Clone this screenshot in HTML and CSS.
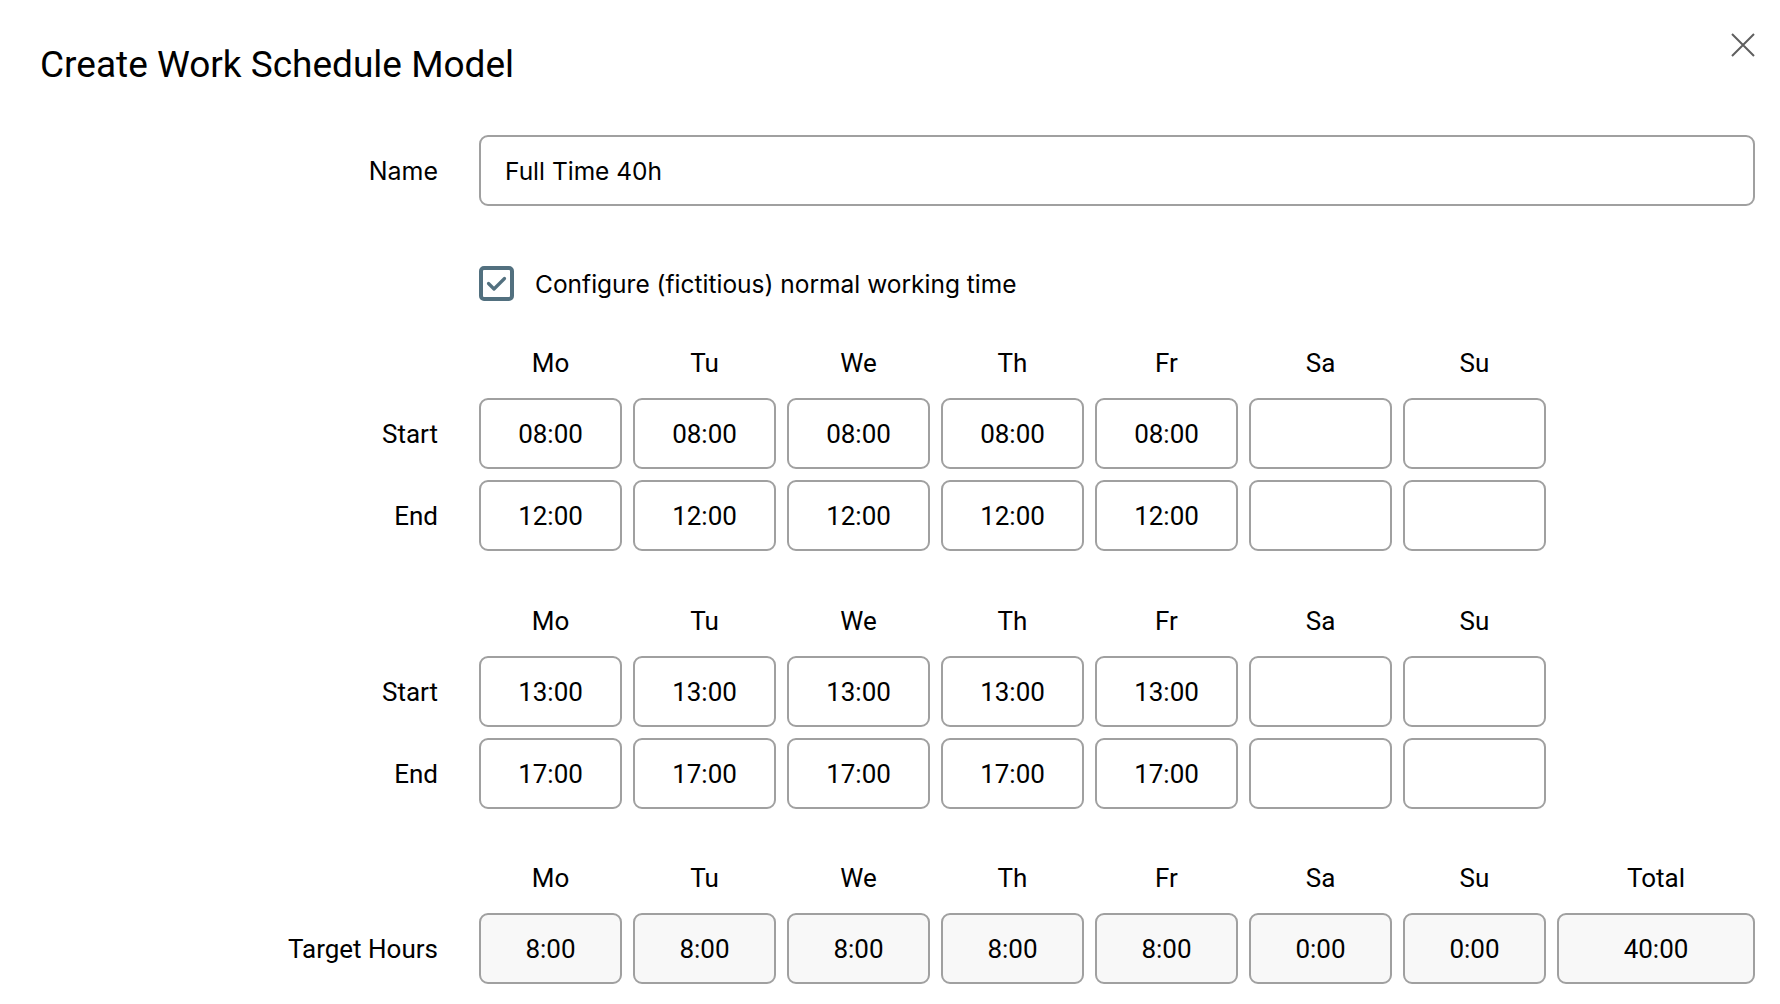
FILE: index.html
```html
<!DOCTYPE html>
<html lang="en">
<head>
    <meta charset="UTF-8">
    <meta name="viewport" content="width=device-width, initial-scale=1.0">
    <title>Create Work Schedule Model</title>
    <link rel="stylesheet" href="styles.css">
</head>
<body>
<div class="dialog">
    <div class="dialog-header">
        <h1>Create Work Schedule Model</h1>
        <button class="close" aria-label="Close">
            <svg width="24" height="24" viewBox="0 0 24 24">
                <path d="M1 1 L23 23 M23 1 L1 23" stroke="#5f5f5f" stroke-width="2" fill="none"/>
            </svg>
        </button>
    </div>

    <div class="field-row">
        <label class="field-label" for="name">Name</label>
        <input id="name" class="text-input" type="text" value="Full Time 40h">
    </div>

    <div class="check-row">
        <label class="check">
            <span class="check-box">
                <svg width="35" height="35" viewBox="0 0 35 35">
                    <rect x="2" y="2" width="31" height="31" rx="3" fill="none" stroke="#52707f" stroke-width="4"/>
                    <polyline points="9.5,17.5 15,23 25.5,12.5" fill="none" stroke="#52707f" stroke-width="3.2" stroke-linecap="round" stroke-linejoin="round"/>
                </svg>
            </span>
            Configure (fictitious) normal working time
        </label>
    </div>

    <!-- morning block -->
    <div class="week-grid">
        <span></span>
        <span class="day">Mo</span>
        <span class="day">Tu</span>
        <span class="day">We</span>
        <span class="day">Th</span>
        <span class="day">Fr</span>
        <span class="day">Sa</span>
        <span class="day">Su</span>

        <label class="row-label">Start</label>
        <input class="time" type="text" value="08:00">
        <input class="time" type="text" value="08:00">
        <input class="time" type="text" value="08:00">
        <input class="time" type="text" value="08:00">
        <input class="time" type="text" value="08:00">
        <input class="time" type="text" value="">
        <input class="time" type="text" value="">

        <label class="row-label">End</label>
        <input class="time" type="text" value="12:00">
        <input class="time" type="text" value="12:00">
        <input class="time" type="text" value="12:00">
        <input class="time" type="text" value="12:00">
        <input class="time" type="text" value="12:00">
        <input class="time" type="text" value="">
        <input class="time" type="text" value="">
    </div>

    <!-- afternoon block -->
    <div class="week-grid">
        <span></span>
        <span class="day">Mo</span>
        <span class="day">Tu</span>
        <span class="day">We</span>
        <span class="day">Th</span>
        <span class="day">Fr</span>
        <span class="day">Sa</span>
        <span class="day">Su</span>

        <label class="row-label">Start</label>
        <input class="time" type="text" value="13:00">
        <input class="time" type="text" value="13:00">
        <input class="time" type="text" value="13:00">
        <input class="time" type="text" value="13:00">
        <input class="time" type="text" value="13:00">
        <input class="time" type="text" value="">
        <input class="time" type="text" value="">

        <label class="row-label">End</label>
        <input class="time" type="text" value="17:00">
        <input class="time" type="text" value="17:00">
        <input class="time" type="text" value="17:00">
        <input class="time" type="text" value="17:00">
        <input class="time" type="text" value="17:00">
        <input class="time" type="text" value="">
        <input class="time" type="text" value="">
    </div>

    <!-- computed target hours -->
    <div class="week-grid">
        <span></span>
        <span class="day">Mo</span>
        <span class="day">Tu</span>
        <span class="day">We</span>
        <span class="day">Th</span>
        <span class="day">Fr</span>
        <span class="day">Sa</span>
        <span class="day">Su</span>
        <span class="day">Total</span>

        <label class="row-label">Target Hours</label>
        <input class="time readonly" type="text" value="8:00" readonly>
        <input class="time readonly" type="text" value="8:00" readonly>
        <input class="time readonly" type="text" value="8:00" readonly>
        <input class="time readonly" type="text" value="8:00" readonly>
        <input class="time readonly" type="text" value="8:00" readonly>
        <input class="time readonly" type="text" value="0:00" readonly>
        <input class="time readonly" type="text" value="0:00" readonly>
        <input class="time readonly" type="text" value="40:00" readonly>
    </div>
</div>
</body>
</html>
```

FILE: styles.css
```css
body {
    margin: 0;
    font-family: Roboto, "Liberation Sans", sans-serif;
    color: #000;
    background-color: #fff;
}
.dialog {
    padding: 0 25px 0 0;
}
.dialog-header {
    display: flex;
    justify-content: space-between;
    align-items: flex-start;
}
.dialog-header h1 {
    margin: 43px 0 0 40px;
    font-size: 37px;
    line-height: 44px;
    font-weight: 400;
}
.close {
    margin-top: 33px;
    padding: 0;
    width: 24px;
    height: 24px;
    border: none;
    background: none;
    cursor: pointer;
}
.close svg {
    display: block;
}

.field-row {
    display: grid;
    grid-template-columns: 438px 1fr;
    column-gap: 41px;
    align-items: center;
    margin-top: 48px;
}
.field-label {
    text-align: right;
    font-family: Inter, "Noto Sans", sans-serif;
    font-size: 25px;
}
.text-input {
    box-sizing: border-box;
    height: 71px;
    padding: 0 24px;
    border: 2px solid #a0a0a0;
    border-radius: 9px;
    font-family: Inter, "Noto Sans", sans-serif;
    font-size: 24.5px;
    color: #000;
}

.check-row {
    margin: 60px 0 0 479px;
}
.check {
    display: flex;
    align-items: center;
    gap: 21px;
    font-family: Inter, "Noto Sans", sans-serif;
    font-size: 24.5px;
    cursor: pointer;
}
.check-box {
    display: block;
    width: 35px;
    height: 35px;
}
.check-box svg {
    display: block;
}

.week-grid {
    display: grid;
    grid-template-columns: 468px repeat(7, 143px) 1fr;
    column-gap: 11px;
    row-gap: 11px;
    margin-top: 50px;
}
.check-row + .week-grid {
    margin-top: 42px;
}
.week-grid + .week-grid + .week-grid {
    margin-top: 49px;
}
.day {
    text-align: center;
    font-size: 26px;
    line-height: 40px;
    padding-bottom: 4px;
}
.row-label {
    grid-column: 1;
    align-self: center;
    text-align: right;
    padding-right: 30px;
    font-size: 26px;
}
.time {
    box-sizing: border-box;
    width: 100%;
    height: 71px;
    border: 2px solid #a0a0a0;
    border-radius: 9px;
    background-color: #fff;
    text-align: center;
    font-family: Roboto, "Liberation Sans", sans-serif;
    font-size: 26px;
    color: #000;
}
.time.readonly {
    background-color: #f8f8f8;
}
```
